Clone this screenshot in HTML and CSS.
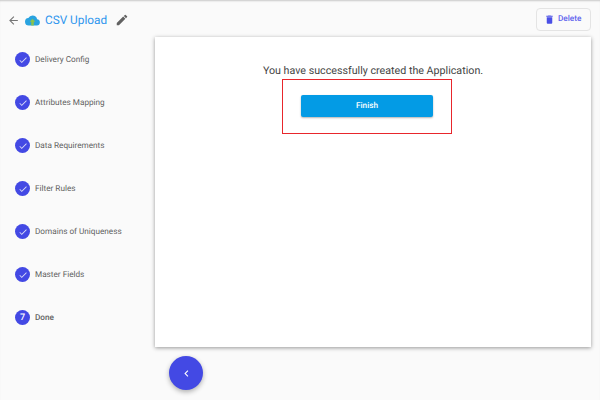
FILE: index.html
```html
<!DOCTYPE html>
<html lang="en">
<head>
    <meta charset="UTF-8">
    <title>CSV Upload</title>
    <link rel="stylesheet" href="styles.css">
</head>
<body>
    <header class="topbar">
        <div class="title-group">
            <svg class="back-icon" viewBox="0 0 24 24"><path d="M20 11H7.83l5.59-5.59L12 4l-8 8 8 8 1.41-1.41L7.83 13H20v-2z"/></svg>
            <svg class="cloud-icon" viewBox="0 0 24 24">
                <path fill="#29a3e0" d="M19.35 10.04A7.49 7.49 0 0 0 12 4a7.5 7.5 0 0 0-6.65 4.04A6 6 0 0 0 6 20h13a5 5 0 0 0 .35-9.96z"/>
                <path fill="#8bc34a" d="M12 9l-4.5 5H10v6h4v-6h2.5z"/>
            </svg>
            <h1>CSV Upload</h1>
            <svg class="edit-icon" viewBox="0 0 24 24"><path d="M3 17.25V21h3.75L17.81 9.94l-3.75-3.75L3 17.25zM20.71 7.04a1 1 0 0 0 0-1.41l-2.34-2.34a1 1 0 0 0-1.41 0l-1.83 1.83 3.75 3.75 1.83-1.83z"/></svg>
        </div>
        <button class="delete-btn">
            <svg viewBox="0 0 24 24"><path d="M6 19a2 2 0 0 0 2 2h8a2 2 0 0 0 2-2V7H6v12zM19 4h-3.5l-1-1h-5l-1 1H5v2h14V4z"/></svg>
            Delete
        </button>
    </header>

    <main class="layout">
        <ul class="stepper">
            <li class="step"><span class="step-dot"><svg viewBox="0 0 24 24"><path d="M9 16.2 4.8 12l-1.4 1.4L9 19 21 7l-1.4-1.4z"/></svg></span>Delivery Config</li>
            <li class="step"><span class="step-dot"><svg viewBox="0 0 24 24"><path d="M9 16.2 4.8 12l-1.4 1.4L9 19 21 7l-1.4-1.4z"/></svg></span>Attributes Mapping</li>
            <li class="step"><span class="step-dot"><svg viewBox="0 0 24 24"><path d="M9 16.2 4.8 12l-1.4 1.4L9 19 21 7l-1.4-1.4z"/></svg></span>Data Requirements</li>
            <li class="step"><span class="step-dot"><svg viewBox="0 0 24 24"><path d="M9 16.2 4.8 12l-1.4 1.4L9 19 21 7l-1.4-1.4z"/></svg></span>Filter Rules</li>
            <li class="step"><span class="step-dot"><svg viewBox="0 0 24 24"><path d="M9 16.2 4.8 12l-1.4 1.4L9 19 21 7l-1.4-1.4z"/></svg></span>Domains of Uniqueness</li>
            <li class="step"><span class="step-dot"><svg viewBox="0 0 24 24"><path d="M9 16.2 4.8 12l-1.4 1.4L9 19 21 7l-1.4-1.4z"/></svg></span>Master Fields</li>
            <li class="step active"><span class="step-dot">7</span>Done</li>
        </ul>

        <section class="content">
            <div class="card">
                <p class="success-text">You have successfully created the Application.</p>
                <div class="highlight-box">
                    <button class="finish-btn">Finish</button>
                </div>
            </div>
            <button class="fab">
                <svg viewBox="0 0 24 24"><path d="M15.41 7.41 14 6l-6 6 6 6 1.41-1.41L10.83 12z"/></svg>
            </button>
        </section>
    </main>
</body>
</html>
```

FILE: styles.css
```css
* {
    margin: 0;
    padding: 0;
    box-sizing: border-box;
    font-family: Roboto, "Liberation Sans", sans-serif;
    text-rendering: geometricPrecision;
}

body {
    width: 600px;
    height: 400px;
    overflow: hidden;
    background-color: #fafafa;
    box-shadow: inset 0 2px 2px -1px rgba(0,0,0,0.2);
}

.topbar {
    display: flex;
    justify-content: space-between;
    align-items: center;
    height: 37px;
    padding: 1px 9px 0 7px;
}

.title-group {
    display: flex;
    align-items: center;
    padding-top: 2px;
}

.back-icon {
    width: 13px;
    height: 13px;
    margin-right: 5px;
    fill: #757575;
}

.cloud-icon {
    width: 15px;
    height: 15px;
    margin-right: 5px;
}

.title-group h1 {
    font-size: 11.8px;
    font-weight: 400;
    color: #2f96ee;
    margin-right: 8px;
}

.edit-icon {
    width: 14px;
    height: 14px;
    fill: #616161;
}

.delete-btn {
    display: flex;
    align-items: center;
    gap: 3px;
    width: 55px;
    height: 23px;
    padding-left: 7px;
    background: #fafafa;
    border: 1px solid #e4e4e4;
    border-radius: 4px;
    color: #5f63ee;
    font-size: 8.2px;
    font-weight: 500;
}

.delete-btn svg {
    width: 11px;
    height: 11px;
    fill: #4a4fe6;
}

.layout {
    display: flex;
}

.stepper {
    width: 155px;
    padding: 15px 0 0 15px;
    list-style: none;
}

.step {
    display: flex;
    align-items: center;
    gap: 5px;
    height: 15px;
    margin-bottom: 28px;
    color: #616161;
    font-size: 8.2px;
    white-space: nowrap;
}

.step.active {
    font-weight: 500;
}

.step-dot {
    display: flex;
    justify-content: center;
    align-items: center;
    flex-shrink: 0;
    width: 15px;
    height: 15px;
    border-radius: 50%;
    background: #4349e4;
    color: white;
    font-size: 9px;
    font-weight: 500;
}

.step-dot svg {
    width: 10px;
    height: 10px;
    fill: #d8daf8;
}

.content {
    width: 436px;
}

.card {
    height: 310px;
    padding-top: 27px;
    background: white;
    box-shadow: 0 1px 4px rgba(0,0,0,0.4);
    text-align: center;
}

.success-text {
    font-size: 10.7px;
    line-height: 14px;
    color: #444;
}

.highlight-box {
    display: flex;
    justify-content: center;
    align-items: center;
    width: 170px;
    height: 55px;
    margin: 1px 0 0 127px;
    border: 1.5px solid #e8262c;
}

.finish-btn {
    width: 132px;
    height: 22px;
    margin-top: -1px;
    background: #039be5;
    color: white;
    border: none;
    border-radius: 2px;
    font-size: 8.2px;
    font-weight: 500;
    box-shadow: 0 1px 2px rgba(0,0,0,0.3);
}

.fab {
    display: flex;
    justify-content: center;
    align-items: center;
    width: 34px;
    height: 34px;
    margin: 9px 0 0 14px;
    background: #4349e4;
    border: none;
    border-radius: 50%;
    box-shadow: 0 2px 5px rgba(0,0,0,0.3);
}

.fab svg {
    width: 13px;
    height: 13px;
    fill: white;
}
```
